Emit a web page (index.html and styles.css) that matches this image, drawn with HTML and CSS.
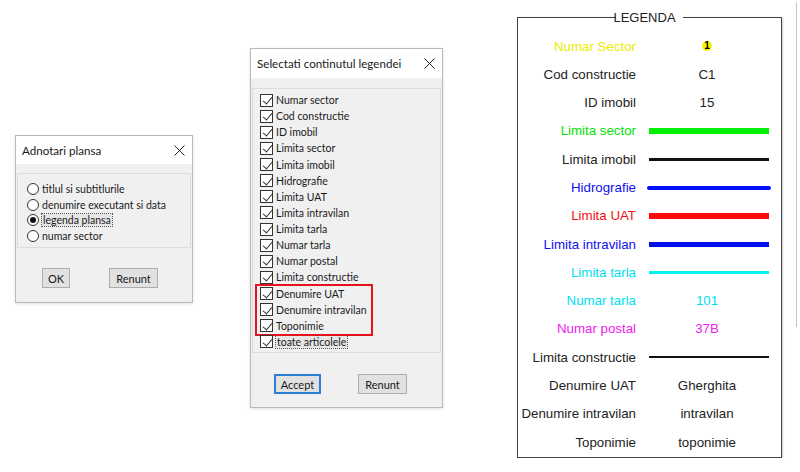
FILE: index.html
```html
<!DOCTYPE html>
<html>
  <head>
    <title>Legenda plansa</title>
    <link rel="stylesheet" href="styles.css">
  </head>
  <body>
    <div class="dialog dialog-small">
      <div class="titlebar">
        <span>Adnotari plansa</span>
        <svg class="close" width="11" height="11" viewBox="0 0 11 11"><path d="M0.5 0.5L10.5 10.5M10.5 0.5L0.5 10.5" stroke="#222" stroke-width="1" fill="none"/></svg>
      </div>
      <div class="dialog-body">
        <div class="group group-radio">
          <div class="row"><span class="radio"></span><span>titlul si subtitlurile</span></div>
          <div class="row"><span class="radio"></span><span>denumire executant si data</span></div>
          <div class="row"><span class="radio checked"></span><span class="focus">legenda plansa</span></div>
          <div class="row"><span class="radio"></span><span>numar sector</span></div>
        </div>
        <div class="buttons buttons-small">
          <button class="btn btn-ok">OK</button>
          <button class="btn btn-cancel">Renunt</button>
        </div>
      </div>
    </div>

    <div class="dialog dialog-list">
      <div class="titlebar">
        <span>Selectati continutul legendei</span>
        <svg class="close" width="11" height="11" viewBox="0 0 11 11"><path d="M0.5 0.5L10.5 10.5M10.5 0.5L0.5 10.5" stroke="#222" stroke-width="1" fill="none"/></svg>
      </div>
      <div class="dialog-body">
        <div class="group group-check">
          <div class="row"><span class="check"></span><span>Numar sector</span></div>
          <div class="row"><span class="check"></span><span>Cod constructie</span></div>
          <div class="row"><span class="check"></span><span>ID imobil</span></div>
          <div class="row"><span class="check"></span><span>Limita sector</span></div>
          <div class="row"><span class="check"></span><span>Limita imobil</span></div>
          <div class="row"><span class="check"></span><span>Hidrografie</span></div>
          <div class="row"><span class="check"></span><span>Limita UAT</span></div>
          <div class="row"><span class="check"></span><span>Limita intravilan</span></div>
          <div class="row"><span class="check"></span><span>Limita tarla</span></div>
          <div class="row"><span class="check"></span><span>Numar tarla</span></div>
          <div class="row"><span class="check"></span><span>Numar postal</span></div>
          <div class="row"><span class="check"></span><span>Limita constructie</span></div>
          <div class="marked">
            <div class="row"><span class="check"></span><span>Denumire UAT</span></div>
            <div class="row"><span class="check"></span><span>Denumire intravilan</span></div>
            <div class="row"><span class="check"></span><span>Toponimie</span></div>
          </div>
          <div class="row"><span class="check"></span><span class="focus">toate articolele</span></div>
        </div>
        <div class="buttons buttons-list">
          <button class="btn btn-accept">Accept</button>
          <button class="btn btn-cancel">Renunt</button>
        </div>
      </div>
    </div>

    <fieldset class="legend">
      <legend>LEGENDA</legend>
      <div class="legend-grid">
        <div class="lbl yellow">Numar Sector</div>
        <div class="val"><span class="dot">1</span></div>

        <div class="lbl">Cod constructie</div>
        <div class="val">C1</div>

        <div class="lbl">ID imobil</div>
        <div class="val">15</div>

        <div class="lbl green">Limita sector</div>
        <div class="val"><div class="line line-sector"></div></div>

        <div class="lbl">Limita imobil</div>
        <div class="val"><div class="line line-imobil"></div></div>

        <div class="lbl blue">Hidrografie</div>
        <div class="val"><div class="line line-hidro"></div></div>

        <div class="lbl red">Limita UAT</div>
        <div class="val"><div class="line line-uat"></div></div>

        <div class="lbl blue">Limita intravilan</div>
        <div class="val"><div class="line line-intravilan"></div></div>

        <div class="lbl cyan">Limita tarla</div>
        <div class="val"><div class="line line-tarla"></div></div>

        <div class="lbl cyan">Numar tarla</div>
        <div class="val cyan">101</div>

        <div class="lbl magenta">Numar postal</div>
        <div class="val magenta">37B</div>

        <div class="lbl">Limita constructie</div>
        <div class="val"><div class="line line-constructie"></div></div>

        <div class="lbl">Denumire UAT</div>
        <div class="val">Gherghita</div>

        <div class="lbl">Denumire intravilan</div>
        <div class="val">intravilan</div>

        <div class="lbl">Toponimie</div>
        <div class="val">toponimie</div>
      </div>
    </fieldset>

    <div class="edge"></div>
  </body>
</html>
```

FILE: styles.css
```css
* {
  box-sizing: border-box;
}

body {
  margin: 0;
  padding: 0 0 0 15px;
  background: white;
  display: flex;
  align-items: flex-start;
  font-family: Lato, "Noto Sans", sans-serif;
  color: #1a1a1a;
}

.dialog {
  background-color: #f0f0f0;
  border: 1px solid #b9b9b9;
  box-shadow: 0 1px 3px rgba(0, 0, 0, 0.12);
}

.dialog-small {
  width: 178px;
  height: 168px;
  margin-top: 135px;
}

.dialog-list {
  width: 193px;
  height: 360px;
  margin-top: 48px;
  margin-left: 57px;
}

.titlebar {
  background-color: white;
  height: 28px;
  padding: 0 7px 0 6px;
  display: flex;
  align-items: center;
  justify-content: space-between;
  font-size: 11.6px;
}

.dialog-list .titlebar {
  height: 29px;
}

.close {
  display: block;
}

.dialog-body {
  padding: 9px 1px 0 1px;
}

.dialog-list .dialog-body {
  padding: 10px 1px 0 1px;
}

.group {
  border: 1px solid #dcdcdc;
  font-size: 10.5px;
}

.group .row {
  display: flex;
  align-items: center;
  gap: 3px;
  white-space: nowrap;
}

.group-radio {
  height: 75px;
  padding: 7px 0 0 9px;
}

.group-radio .row {
  height: 15.7px;
}

.group-check {
  height: 265px;
  padding: 3px 0 0 7px;
}

.group-check .row {
  height: 16.13px;
}

.radio {
  width: 12px;
  height: 12px;
  border: 1px solid #333;
  border-radius: 50%;
  background: white;
  display: flex;
  align-items: center;
  justify-content: center;
  flex: none;
}

.radio.checked::after {
  content: "";
  width: 6px;
  height: 6px;
  border-radius: 50%;
  background: #111;
}

.check {
  width: 13px;
  height: 13px;
  border: 1px solid #333;
  background: white;
  position: relative;
  flex: none;
}

.check::after {
  content: "";
  position: absolute;
  left: 3.5px;
  top: 0.5px;
  width: 4px;
  height: 8px;
  border-right: 1.2px solid #333;
  border-bottom: 1.2px solid #333;
  transform: rotate(40deg);
}

.focus {
  outline: 1px dotted #555;
  outline-offset: 0;
  background: #e6e6e6;
  padding: 0 1px;
}

.marked {
  width: 114px;
  margin-left: -3px;
  padding-left: 3px;
  outline: 2px solid #e8121c;
}

.buttons {
  display: flex;
}

.buttons-small {
  padding: 20px 0 0 25px;
  gap: 39px;
}

.buttons-list {
  padding: 21px 0 0 22px;
  gap: 37px;
}

.btn {
  height: 20px;
  padding: 0;
  border: 1px solid #adadad;
  background: #e1e1e1;
  font-family: Lato, "Noto Sans", sans-serif;
  font-size: 11px;
  color: #1a1a1a;
}

.btn-ok {
  width: 28px;
}

.btn-cancel {
  width: 49px;
}

.btn-accept {
  width: 47px;
  border: 2px solid #2a7fd4;
}

/* legenda */

.legend {
  width: 265px;
  height: 448px;
  margin: 10px 0 0 74px;
  padding: 7px 0 0 0;
  border: 1px solid #444;
  box-shadow: 1px 1px 2px rgba(0, 0, 0, 0.2);
  font-family: "Liberation Sans", Arial, sans-serif;
  font-size: 13.3px;
  color: #222;
}

.legend legend {
  margin: 0 auto;
  padding: 0 2px;
  line-height: 15px;
  font-size: 13px;
  position: relative;
  left: -5px;
}

.legend-grid {
  display: grid;
  grid-template-columns: 118px 120px;
  grid-auto-rows: 28.29px;
  column-gap: 13px;
}

.lbl {
  text-align: right;
  align-self: center;
  white-space: nowrap;
}

.val {
  text-align: center;
  align-self: center;
  display: flex;
  justify-content: center;
  align-items: center;
  padding-right: 4px;
}

.dot {
  width: 10px;
  height: 10px;
  border-radius: 50%;
  background: #f4f400;
  color: #000;
  font-size: 10px;
  line-height: 10px;
  font-weight: bold;
  text-align: center;
}

.line {
  width: 120px;
  flex: none;
  margin-right: -4px;
}

.line-sector {
  height: 6px;
  background: #00f000;
}

.line-imobil {
  height: 3px;
  background: #111;
}

.line-hidro {
  width: 124px;
  height: 4px;
  border-radius: 2px;
  background: #0010f8;
}

.line-uat {
  height: 6px;
  background: #ff0a0a;
}

.line-intravilan {
  height: 5px;
  background: #0010e8;
}

.line-tarla {
  height: 3px;
  background: #00f4f4;
}

.line-constructie {
  height: 2px;
  background: #111;
}

.yellow {
  color: #ecec00;
}

.green {
  color: #00e400;
}

.blue {
  color: #1010f0;
}

.red {
  color: #f01010;
}

.cyan {
  color: #00e0f0;
}

.magenta {
  color: #f020f0;
}

.edge {
  width: 1px;
  height: 325px;
  margin: 2px 0 0 14px;
  background: #c4c4c4;
}
```
